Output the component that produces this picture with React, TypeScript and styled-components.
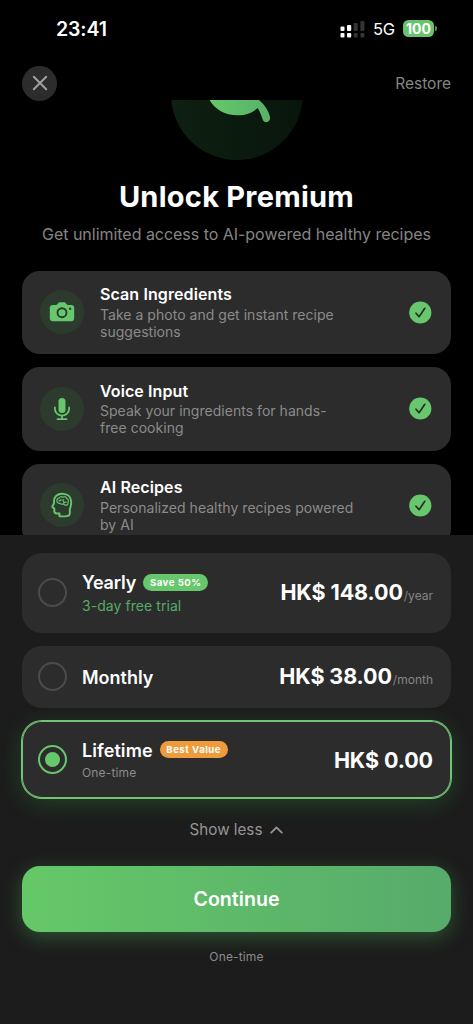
import React, { useState } from 'react';
import styled, { createGlobalStyle, css } from 'styled-components';

const Global = createGlobalStyle`
  * { box-sizing: border-box; }
  body { margin: 0; background: #000; font-family: Inter, "Liberation Sans", sans-serif; }
  button { font: inherit; color: inherit; border: 0; padding: 0; background: none; }
  svg { display: block; flex: none; }
`;

const Screen = styled.main`
  width: 473px;
  height: 1024px;
  display: flex;
  flex-direction: column;
  overflow: hidden;
  background: #000;
  color: #fff;
`;

const StatusBar = styled.header`
  height: 65px;
  flex: none;
  display: flex;
  justify-content: space-between;
  align-items: flex-start;
  padding: 17px 36px 0 56px;
`;

const Clock = styled.span`
  font-size: 19.5px;
  line-height: 24px;
  font-weight: 600;
  letter-spacing: -0.1px;
`;

const Indicators = styled.div`
  display: flex;
  align-items: center;
  height: 24px;
`;

const Network = styled.span`
  margin-left: 8px;
  width: 22px;
  font-size: 16.5px;
  line-height: 24px;
  letter-spacing: -0.3px;
  white-space: nowrap;
`;

const Battery = styled.span`
  margin: -2px 0 0 8px;
  width: 31px;
  height: 17px;
  border-radius: 5.5px;
  background: #66c46a;
  font-size: 14px;
  line-height: 17px;
  font-weight: 700;
  text-align: center;
  letter-spacing: 0;
`;

const BatteryTip = styled.span`
  width: 2px;
  height: 5px;
  margin: -2px 0 0 1px;
  border-radius: 0 2px 2px 0;
  background: #4f9a55;
`;

const NavBar = styled.nav`
  height: 35px;
  flex: none;
  display: flex;
  align-items: center;
  justify-content: space-between;
  padding: 1px 22px 0;
`;

const CloseButton = styled.button`
  width: 35px;
  height: 35px;
  border-radius: 50%;
  background: #2c2c2c;
  display: grid;
  place-items: center;
`;

const Restore = styled.button`
  padding-top: 1px;
  font-size: 15.5px;
  line-height: 20px;
  color: #858585;
`;

const Content = styled.section`
  height: 435px;
  flex: none;
  overflow: hidden;
  display: flex;
  flex-direction: column;
  padding: 0 22px;
`;

const Hero = styled.div`
  height: 60px;
  flex: none;
  display: flex;
  justify-content: center;
  align-items: flex-end;
  overflow: hidden;
`;

const Title = styled.h1`
  margin: 19px 0 0;
  font-size: 29px;
  line-height: 36px;
  font-weight: 700;
  letter-spacing: 0.25px;
  text-align: center;
  white-space: nowrap;
`;

const Subtitle = styled.p`
  margin: 8px 0 0;
  font-size: 16px;
  line-height: 22px;
  letter-spacing: -0.03px;
  color: #858585;
  text-align: center;
  white-space: nowrap;
`;

const FeatureList = styled.div`
  margin-top: 25.5px;
  display: flex;
  flex-direction: column;
  gap: 13px;
`;

const Feature = styled.article`
  height: 83.5px;
  flex: none;
  display: flex;
  align-items: center;
  padding: 0 19px 0 18px;
  border-radius: 18px;
  background: #2c2c2c;
`;

const FeatureIcon = styled.div`
  width: 44px;
  height: 44px;
  flex: none;
  border-radius: 50%;
  background: #2d3b2f;
  display: grid;
  place-items: center;
`;

const FeatureText = styled.div`
  flex: 1;
  margin-left: 16px;
  padding-bottom: 1.2px;
`;

const FeatureTitle = styled.h2`
  margin: 0;
  font-size: 16px;
  line-height: 22px;
  font-weight: 600;
  letter-spacing: 0.1px;
`;

const FeatureBody = styled.p`
  margin: 0.5px 0 0;
  font-size: 14px;
  line-height: 17.4px;
  letter-spacing: 0.03px;
  color: #8b8b8b;
  white-space: pre-line;
`;

const Sheet = styled.section`
  flex: 1;
  display: flex;
  flex-direction: column;
  align-items: stretch;
  padding: 18px 22px 0;
  background: #1c1c1c;
`;

const Plans = styled.div`
  display: flex;
  flex-direction: column;
  gap: 13px;
`;

const Plan = styled.div<{ $height: number; $selected: boolean }>`
  height: ${p => p.$height}px;
  display: flex;
  align-items: center;
  padding: 0 18px 0 16px;
  border-radius: 20px;
  background: #2c2c2c;
  ${p => p.$selected && css`
    box-shadow: 0 0 0 1px #72c475, inset 0 0 0 1px #72c475, 0 5px 24px rgba(60, 190, 80, 0.24);
  `}
`;

const Radio = styled.span<{ $selected: boolean }>`
  width: 29px;
  height: 29px;
  flex: none;
  border-radius: 50%;
  border: 2px solid ${p => (p.$selected ? '#66c76c' : '#4b4b4b')};
  display: grid;
  place-items: center;
`;

const RadioDot = styled.span`
  width: 15px;
  height: 15px;
  border-radius: 50%;
  background: #66c76c;
`;

const PlanInfo = styled.div`
  margin-left: 15px;
  flex: 1;
`;

const PlanHeading = styled.div`
  display: flex;
  align-items: center;
  gap: 7px;
  height: 24px;
`;

const PlanName = styled.span<{ $tracking?: number }>`
  padding-top: 2px;
  font-size: 18px;
  line-height: 24px;
  font-weight: 600;
  letter-spacing: ${p => p.$tracking ?? 0}px;
  white-space: nowrap;
`;

const Badge = styled.span<{ $color: string; $width: number }>`
  width: ${p => p.$width}px;
  height: 17px;
  border-radius: 9px;
  background: ${p => p.$color};
  font-size: 9.6px;
  line-height: 17px;
  font-weight: 700;
  letter-spacing: 0.5px;
  text-align: center;
  white-space: nowrap;
`;

const PlanNote = styled.div<{ $accent: boolean }>`
  margin-top: 2px;
  font-size: ${p => (p.$accent ? 14 : 12)}px;
  line-height: ${p => (p.$accent ? 19 : 17)}px;
  letter-spacing: ${p => (p.$accent ? 0.06 : 0.15)}px;
  color: ${p => (p.$accent ? '#55ab68' : '#8b8b8b')};
`;

const Price = styled.div`
  padding-top: 2px;
  display: flex;
  align-items: baseline;
  font-size: 21.5px;
  line-height: 28px;
  font-weight: 700;
  letter-spacing: -0.1px;
  white-space: nowrap;
`;

const Period = styled.span`
  margin-left: 1px;
  font-size: 12px;
  font-weight: 400;
  letter-spacing: 0;
  color: #858585;
`;

const ShowLess = styled.button`
  margin-top: 21px;
  height: 22px;
  display: flex;
  align-items: center;
  justify-content: center;
  gap: 8px;
  font-size: 15.2px;
  line-height: 22px;
  color: #959595;
`;

const Continue = styled.button`
  margin-top: 25px;
  height: 66px;
  flex: none;
  border-radius: 18px;
  background: linear-gradient(90deg, #65c868, #57ab6b);
  box-shadow: 0 5px 20px rgba(76, 195, 90, 0.34);
  font-size: 19.6px;
  font-weight: 600;
`;

const Footnote = styled.p`
  margin: 17px 0 0;
  font-size: 12px;
  line-height: 16px;
  letter-spacing: 0.15px;
  color: #8b8b8b;
  text-align: center;
`;

const GREEN = '#66c76c';

const SignalIcon = () => (
  <svg width="25" height="18" viewBox="0 0 25 18">
    <g fill="#fff">
      <rect x="0.5" y="6.500" width="4" height="4.500" rx="1" />
      <rect x="7" y="5" width="4.200" height="6" rx="1" />
      <rect x="0.5" y="13" width="4" height="4.500" rx="1" />
      <rect x="7" y="13" width="4.200" height="4.500" rx="1" />
    </g>
    <g fill="#343434">
      <rect x="13.7" y="3" width="4" height="8" rx="1" />
      <rect x="20.4" y="1" width="4" height="10" rx="1" />
      <rect x="13.7" y="13" width="4" height="4.500" rx="1" />
      <rect x="20.4" y="13" width="4" height="4.500" rx="1" />
    </g>
  </svg>
);

const CloseIcon = () => (
  <svg width="16" height="16" viewBox="0 0 16 16" fill="none" stroke="#a0a0a0" strokeWidth="2" strokeLinecap="round">
    <path d="M1.800 1.800 14.200 14.200M14.200 1.800 1.800 14.200" />
  </svg>
);

const LeafEmblem = () => (
  <svg width="132" height="60" viewBox="0 0 132 60">
    <defs>
      <linearGradient id="disc" x1="0" y1="0" x2="1" y2="0">
        <stop offset="0" stopColor="#0e2011" />
        <stop offset="1" stopColor="#08150b" />
      </linearGradient>
      <linearGradient id="leaf" x1="0" y1="0" x2="1" y2="0">
        <stop offset="0" stopColor="#65c86a" />
        <stop offset="1" stopColor="#58b168" />
      </linearGradient>
    </defs>
    <circle cx="66" cy="-6" r="66" fill="url(#disc)" />
    <path
      fill="url(#leaf)"
      d="M37.500 -2C43 9 53 15.200 66.500 15.200C75.500 15.200 81.800 12.500 86.600 8C89 11.500 90.400 15.500 91.500 19C92.400 21.600 94 22.500 96 22C98.600 21.400 99.500 19.300 98.900 16.500C97.500 10.500 93 3.500 86 -1.500Z"
    />
  </svg>
);

const CameraIcon = () => (
  <svg width="26" height="22" viewBox="0 0 26 22">
    <path
      fill={GREEN}
      d="M4 4H7C7.700 4 8.100 3.700 8.500 3.100L9.100 2.200C9.600 1.500 10.100 1.200 11 1.200H15C15.900 1.200 16.400 1.500 16.900 2.200L17.500 3.100C17.900 3.700 18.300 4 19 4H22C24.100 4 25.200 5.100 25.200 7.100V17C25.200 19.100 24.100 20.200 22 20.200H4C1.900 20.200 0.800 19.100 0.800 17V7.100C0.800 5.100 1.900 4 4 4Z"
    />
    <circle cx="13" cy="11.700" r="4.500" fill={GREEN} stroke="#2d3b2f" strokeWidth="1.900" />
    <circle cx="21.100" cy="7.700" r="1.200" fill="#2d3b2f" />
  </svg>
);

const MicIcon = () => (
  <svg width="18" height="24" viewBox="0 0 18 24" fill="none" stroke={GREEN} strokeWidth="1.800" strokeLinecap="round">
    <rect x="5.500" y="1" width="7" height="15" rx="3.500" fill={GREEN} stroke="none" />
    <path d="M1.900 10.500V11.800A7.100 6.800 0 0 0 16.100 11.800V10.500M9 18.700V22M4.500 22.200H13.500" />
  </svg>
);

const MindIcon = () => (
  <svg width="24" height="26" viewBox="0 0 24 26" fill="none" stroke={GREEN} strokeLinecap="round" strokeLinejoin="round">
    <path
      strokeWidth="1.900"
      d="M9.500 24.400V21.500H6.700C5 21.500 4.300 20.700 4.300 19.100V16.300L2.900 15.600C2.200 15.200 2.200 14.600 2.600 14L4 11.300V9.500C4 4.400 7.300 1.800 12.200 1.800C17.800 1.800 21.200 5 21.200 10.200C21.200 13.700 20.200 15.600 19.800 17.600V21.300C19.800 23.400 18 24.400 15 24.400Z"
    />
    <path
      strokeWidth="1.200"
      d="M7 9.500C6.400 7.500 7.700 6.300 9 6.200C9.600 4.600 11.800 4.300 12.800 5.200C14.500 4.200 16.300 5 16.700 6.500C18.300 7.200 18.800 8.800 18 10.200C18.500 12 17.300 13.200 16 13C15 13.400 14 12.600 13.600 11.700C12.200 12.700 10.500 12.200 10 11.200C8.600 11.600 7.300 10.800 7 9.500ZM9 8.700C10.300 9 11 8.300 11 7.300M13.800 7.500C12.700 7.800 12.600 9 13.500 9.600M13.600 11.700C13.800 10.500 14.900 9.800 16.100 10.300"
    />
  </svg>
);

const CheckIcon = () => (
  <svg width="23" height="23" viewBox="0 0 23 23">
    <circle cx="11.300" cy="11.500" r="11.100" fill={GREEN} />
    <path d="M7 12.200 10.100 15.700 15.800 7.300" fill="none" stroke="#2c2c2c" strokeWidth="1.700" strokeLinecap="round" strokeLinejoin="round" />
  </svg>
);

const ChevronUp = () => (
  <svg width="13" height="8" viewBox="0 0 13 8" fill="none" stroke="#959595" strokeWidth="1.800" strokeLinecap="round" strokeLinejoin="round">
    <path d="M1.200 6.700 6.500 1.400 11.800 6.700" />
  </svg>
);

const features = [
  { title: 'Scan Ingredients', body: 'Take a photo and get instant recipe\nsuggestions', Icon: CameraIcon },
  { title: 'Voice Input', body: 'Speak your ingredients for hands-\nfree cooking', Icon: MicIcon },
  { title: 'AI Recipes', body: 'Personalized healthy recipes powered\nby AI', Icon: MindIcon },
];

const plans = [
  { name: 'Yearly', tracking: -0.15, badge: 'Save 50%', color: '#66c76c', badgeWidth: 65, note: '3-day free trial', accent: true, price: 'HK$ 148.00', period: '/year', height: 79.5 },
  { name: 'Monthly', price: 'HK$ 38.00', period: '/month', height: 62 },
  { name: 'Lifetime', tracking: 0.08, badge: 'Best Value', color: '#ee9c3b', badgeWidth: 68, note: 'One-time', price: 'HK$ 0.00', height: 77 },
];

export default function App() {
  const [selected, setSelected] = useState('Lifetime');
  return (
    <Screen>
      <Global />
      <StatusBar>
        <Clock>23:41</Clock>
        <Indicators>
          <SignalIcon />
          <Network>5G</Network>
          <Battery>100</Battery>
          <BatteryTip />
        </Indicators>
      </StatusBar>
      <NavBar>
        <CloseButton aria-label="Close"><CloseIcon /></CloseButton>
        <Restore>Restore</Restore>
      </NavBar>
      <Content>
        <Hero><LeafEmblem /></Hero>
        <Title>Unlock Premium</Title>
        <Subtitle>Get unlimited access to AI-powered healthy recipes</Subtitle>
        <FeatureList>
          {features.map(({ title, body, Icon }) => (
            <Feature key={title}>
              <FeatureIcon><Icon /></FeatureIcon>
              <FeatureText>
                <FeatureTitle>{title}</FeatureTitle>
                <FeatureBody>{body}</FeatureBody>
              </FeatureText>
              <CheckIcon />
            </Feature>
          ))}
        </FeatureList>
      </Content>
      <Sheet>
        <Plans>
          {plans.map(plan => (
            <Plan key={plan.name} $height={plan.height} $selected={selected === plan.name} onClick={() => setSelected(plan.name)}>
              <Radio $selected={selected === plan.name}>{selected === plan.name && <RadioDot />}</Radio>
              <PlanInfo>
                <PlanHeading>
                  <PlanName $tracking={plan.tracking}>{plan.name}</PlanName>
                  {plan.badge && <Badge $color={plan.color!} $width={plan.badgeWidth!}>{plan.badge}</Badge>}
                </PlanHeading>
                {plan.note && <PlanNote $accent={!!plan.accent}>{plan.note}</PlanNote>}
              </PlanInfo>
              <Price>{plan.price}{plan.period && <Period>{plan.period}</Period>}</Price>
            </Plan>
          ))}
        </Plans>
        <ShowLess>Show less<ChevronUp /></ShowLess>
        <Continue>Continue</Continue>
        <Footnote>One-time</Footnote>
      </Sheet>
    </Screen>
  );
}
